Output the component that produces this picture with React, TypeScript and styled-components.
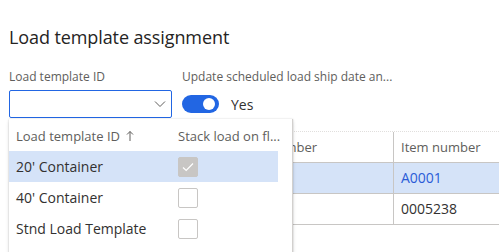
import styled, { createGlobalStyle } from "styled-components"

const GlobalStyle = createGlobalStyle`
  html, body {
    margin: 0;
    padding: 0;
    background: #ffffff;
    font-family: "Open Sans", "Noto Sans", sans-serif;
    color: #323130;
    overflow: hidden;
  }
`

const Style = {
  Page: styled.div`
    position: relative;
    width: 499px;
    height: 252px;
    padding: 0 0 0 9px;
    box-sizing: border-box;
    overflow: hidden;
  `,
  Title: styled.h2`
    margin: 0;
    padding-top: 25px;
    height: 24px;
    line-height: 24px;
    font-size: 18px;
    font-weight: 500;
    color: #252423;
    letter-spacing: -0.1px;
  `,
  FormRow: styled.div`
    display: flex;
    gap: 10px;
    margin-top: 20px;
  `,
  Field: styled.div`
    display: flex;
    flex-direction: column;
    gap: 5px;
  `,
  Label: styled.label`
    font-size: 12px;
    line-height: 16px;
    color: #605e5c;
    height: 16px;
    white-space: nowrap;
  `,
  Input: styled.div`
    width: 163px;
    height: 28px;
    box-sizing: border-box;
    border: 1px solid #2266e3;
    border-radius: 2px;
    display: flex;
    align-items: center;
    justify-content: flex-end;
    padding-right: 5px;
  `,
  ToggleRow: styled.div`
    display: flex;
    align-items: center;
    gap: 12px;
    height: 28px;
  `,
  Toggle: styled.div<{ $on: boolean }>`
    width: 37px;
    height: 18px;
    border-radius: 9px;
    background: ${(p) => (p.$on ? "#2266e3" : "#ffffff")};
    display: flex;
    align-items: center;
    justify-content: ${(p) => (p.$on ? "flex-end" : "flex-start")};
    padding: 0 4px;
    box-sizing: border-box;
    &::after {
      content: "";
      width: 12px;
      height: 12px;
      border-radius: 50%;
      background: #ffffff;
    }
  `,
  ToggleText: styled.span`
    font-size: 14px;
    color: #323130;
  `,
  Grid: styled.div`
    display: grid;
    grid-template-columns: 230px 154px 1fr;
    margin-top: 13px;
    border-top: 1px dotted #e1dfdd;
  `,
  HeadCell: styled.div<{ $divider?: boolean }>`
    height: 30px;
    line-height: 30px;
    font-size: 13px;
    color: #605e5c;
    padding-left: 7px;
    border-bottom: 1px solid #c8c6c4;
    border-left: ${(p) => (p.$divider ? "1px solid #c8c6c4" : "none")};
    white-space: nowrap;
  `,
  Cell: styled.div<{ $selected?: boolean; $divider?: boolean; $link?: boolean }>`
    height: 30px;
    line-height: 30px;
    font-size: 14px;
    padding-left: 7px;
    color: ${(p) => (p.$link ? "#2a5bd7" : "#323130")};
    background: ${(p) => (p.$selected ? "#d5e3f8" : "transparent")};
    border-bottom: 1px solid #c8c6c4;
    border-left: ${(p) => (p.$divider ? "1px solid #c8c6c4" : "none")};
    white-space: nowrap;
  `,
  Popup: styled.div`
    position: absolute;
    left: 9px;
    top: 119px;
    width: 283px;
    height: 150px;
    background: #ffffff;
    box-shadow: 0 1.6px 3.6px rgba(0, 0, 0, 0.13), 0 0.3px 0.9px rgba(0, 0, 0, 0.11),
      0 0 2px rgba(0, 0, 0, 0.15);
    border-right: 1px solid #d2d0ce;
  `,
  PopupTable: styled.div`
    display: grid;
    grid-template-columns: 162px 107px;
    width: 269px;
  `,
  PopupHead: styled.div`
    height: 32px;
    padding-top: 2px;
    box-sizing: border-box;
    font-size: 13px;
    color: #605e5c;
    padding-left: 7px;
    white-space: nowrap;
    display: flex;
    align-items: center;
    gap: 6px;
  `,
  PopupCell: styled.div<{ $selected?: boolean }>`
    height: 31px;
    font-size: 14px;
    color: #323130;
    padding-left: 7px;
    display: flex;
    align-items: center;
    background: ${(p) => (p.$selected ? "#d5e3f8" : "transparent")};
    white-space: nowrap;
  `,
  Check: styled.div<{ $checked?: boolean }>`
    width: 20px;
    height: 20px;
    box-sizing: border-box;
    border-radius: 2px;
    border: 1px solid #c8c6c4;
    background: ${(p) => (p.$checked ? "#c8c6c4" : "#ffffff")};
    display: flex;
    align-items: center;
    justify-content: center;
  `,
}

const rows = [
  { id: "20' Container", checked: true },
  { id: "40' Container", checked: false },
  { id: "Stnd Load Template", checked: false },
]

export default function App() {
  return (
    <>
      <GlobalStyle />
      <Style.Page>
        <Style.Title>Load template assignment</Style.Title>
        <Style.FormRow>
          <Style.Field>
            <Style.Label>Load template ID</Style.Label>
            <Style.Input>
              <svg width="12" height="8" viewBox="0 0 12 8">
                <path d="M1 1.5 L6 6.5 L11 1.5" fill="none" stroke="#605e5c" strokeWidth="1" />
              </svg>
            </Style.Input>
          </Style.Field>
          <Style.Field>
            <Style.Label>Update scheduled load ship date an...</Style.Label>
            <Style.ToggleRow>
              <Style.Toggle $on={true} />
              <Style.ToggleText>Yes</Style.ToggleText>
            </Style.ToggleRow>
          </Style.Field>
        </Style.FormRow>

        <Style.Grid>
          <Style.HeadCell />
          <Style.HeadCell>Lot number</Style.HeadCell>
          <Style.HeadCell $divider>Item number</Style.HeadCell>
          <Style.Cell $selected />
          <Style.Cell $selected />
          <Style.Cell $selected $divider $link>A0001</Style.Cell>
          <Style.Cell />
          <Style.Cell />
          <Style.Cell $divider>0005238</Style.Cell>
        </Style.Grid>

        <Style.Popup>
          <Style.PopupTable>
            <Style.PopupHead>
              Load template ID
              <svg width="8" height="12" viewBox="0 0 8 12">
                <path d="M4 11 V1.5 M1 4.5 L4 1.5 L7 4.5" fill="none" stroke="#605e5c" strokeWidth="1" />
              </svg>
            </Style.PopupHead>
            <Style.PopupHead>Stack load on fl...</Style.PopupHead>
            {rows.map((r, i) => (
              <>
                <Style.PopupCell key={r.id} $selected={i === 0}>
                  {r.id}
                </Style.PopupCell>
                <Style.PopupCell key={r.id + "c"} $selected={i === 0}>
                  <Style.Check $checked={r.checked}>
                    {r.checked && (
                      <svg width="12" height="10" viewBox="0 0 12 10">
                        <path d="M1 5.5 L4.2 8.5 L11 1.5" fill="none" stroke="#ffffff" strokeWidth="1.2" />
                      </svg>
                    )}
                  </Style.Check>
                </Style.PopupCell>
              </>
            ))}
          </Style.PopupTable>
        </Style.Popup>
      </Style.Page>
    </>
  )
}
